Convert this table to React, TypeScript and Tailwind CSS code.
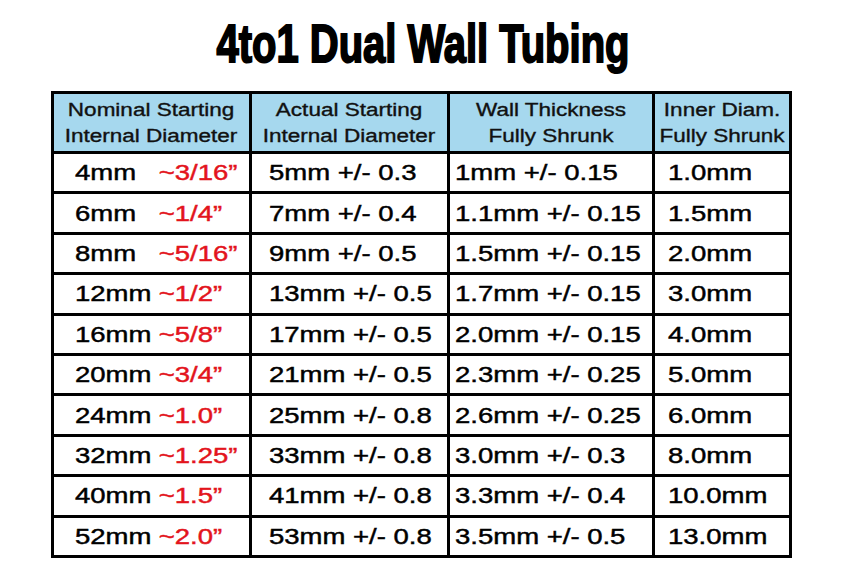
const rows = [
  { nom: '4mm', inch: '~3/16”', actual: '5mm +/- 0.3', wall: '1mm +/- 0.15', inner: '1.0mm' },
  { nom: '6mm', inch: '~1/4”', actual: '7mm +/- 0.4', wall: '1.1mm +/- 0.15', inner: '1.5mm' },
  { nom: '8mm', inch: '~5/16”', actual: '9mm +/- 0.5', wall: '1.5mm +/- 0.15', inner: '2.0mm' },
  { nom: '12mm', inch: '~1/2”', actual: '13mm +/- 0.5', wall: '1.7mm +/- 0.15', inner: '3.0mm' },
  { nom: '16mm', inch: '~5/8”', actual: '17mm +/- 0.5', wall: '2.0mm +/- 0.15', inner: '4.0mm' },
  { nom: '20mm', inch: '~3/4”', actual: '21mm +/- 0.5', wall: '2.3mm +/- 0.25', inner: '5.0mm' },
  { nom: '24mm', inch: '~1.0”', actual: '25mm +/- 0.8', wall: '2.6mm +/- 0.25', inner: '6.0mm' },
  { nom: '32mm', inch: '~1.25”', actual: '33mm +/- 0.8', wall: '3.0mm +/- 0.3', inner: '8.0mm' },
  { nom: '40mm', inch: '~1.5”', actual: '41mm +/- 0.8', wall: '3.3mm +/- 0.4', inner: '10.0mm' },
  { nom: '52mm', inch: '~2.0”', actual: '53mm +/- 0.8', wall: '3.5mm +/- 0.5', inner: '13.0mm' },
]

const headers = [
  ['Nominal Starting', 'Internal Diameter'],
  ['Actual Starting', 'Internal Diameter'],
  ['Wall Thickness', 'Fully Shrunk'],
  ['Inner Diam.', 'Fully Shrunk'],
]

function Header({ lines }: { lines: string[] }) {
  return (
    <div className="flex items-center justify-center bg-[#a6d8ee] text-[18px] leading-[26px] text-[#111]">
      <span className="inline-block origin-center scale-x-[1.25] whitespace-nowrap text-center [-webkit-text-stroke-width:0.35px]">
        {lines[0]}
        <br />
        {lines[1]}
      </span>
    </div>
  )
}

function Cell({ pad, children }: { pad: string; children: React.ReactNode }) {
  return (
    <div className={`flex items-center bg-white text-[22px] text-black ${pad}`}>
      <span className="inline-block origin-left scale-x-[1.25] whitespace-nowrap [-webkit-text-stroke-width:0.45px]">
        {children}
      </span>
    </div>
  )
}

export default function App() {
  return (
    <div className="h-[580px] w-[850px] bg-white font-['Liberation_Sans',Arial,sans-serif]">
      {/* Title */}
      <div className="flex h-[70px] justify-center pt-[16px] pr-[4px] text-[54px] font-bold leading-[54px] text-black">
        <span className="inline-block origin-center scale-x-[0.74] whitespace-nowrap [-webkit-text-stroke:2px_black]">
          4to1 Dual Wall Tubing
        </span>
      </div>

      {/* Table */}
      <div className="mt-[21px] ml-[51px] grid w-fit grid-cols-[195px_195px_202px_134px] grid-rows-[57px_repeat(10,37.4px)] gap-[3px] bg-black p-[3px]">
        {headers.map((h, i) => (
          <Header key={i} lines={h} />
        ))}
        {rows.map((r, i) => (
          <div key={i} className="contents">
            <Cell pad="pl-[21px]">
              <span className="inline-block w-[67px]">{r.nom}</span>
              <span className="text-[#e3141c]">{r.inch}</span>
            </Cell>
            <Cell pad="pl-[17px]">{r.actual}</Cell>
            <Cell pad="pl-[5px]">{r.wall}</Cell>
            <Cell pad="pl-[13px]">{r.inner}</Cell>
          </div>
        ))}
      </div>
    </div>
  )
}
